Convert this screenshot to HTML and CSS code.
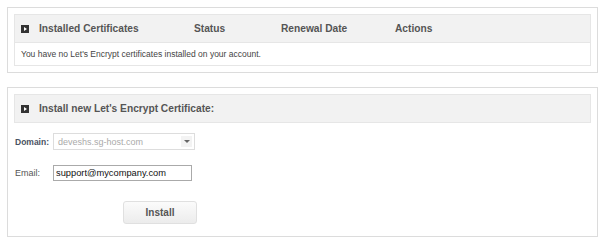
FILE: index.html
```html
<!DOCTYPE html>
<html>
<head>
    <meta charset="UTF-8">
    <title>Let's Encrypt Certificates</title>
    <link rel="stylesheet" href="styles.css">
</head>
<body>
    <div class="panel">
        <div class="panel-head">
            <span class="arrow"></span>
            <div class="cols">
                <span>Installed Certificates</span>
                <span>Status</span>
                <span>Renewal Date</span>
                <span>Actions</span>
            </div>
        </div>
        <div class="panel-row">You have no Let's Encrypt certificates installed on your account.</div>
    </div>

    <div class="panel">
        <div class="panel-head">
            <span class="arrow"></span>
            <span>Install new Let's Encrypt Certificate:</span>
        </div>
        <form class="install-form">
            <div class="field">
                <label class="bold">Domain:</label>
                <div class="select">
                    <span>deveshs.sg-host.com</span>
                    <span class="select-btn"></span>
                </div>
            </div>
            <div class="field">
                <label>Email:</label>
                <input type="text" class="text-input" value="support@mycompany.com">
            </div>
            <div class="actions">
                <button type="button" class="btn">Install</button>
            </div>
        </form>
    </div>
</body>
</html>
```

FILE: styles.css
```css
body {
    margin: 0;
    padding: 7px 2px 0 7px;
    font-family: 'Liberation Sans', Arial, sans-serif;
    font-size: 9px;
    color: #444;
    background: #fff;
}
.panel {
    border: 1px solid #dcdcdc;
    padding: 6px;
    margin-bottom: 14px;
}
.panel-head {
    display: flex;
    align-items: center;
    height: 27px;
    padding-left: 6px;
    background-color: #f2f2f2;
    border: 1px solid #e6e6e6;
    font-size: 10.2px;
    font-weight: bold;
    color: #555;
}
.arrow {
    position: relative;
    width: 8px;
    height: 8px;
    background-color: #333;
    margin-right: 10px;
    flex: none;
}
.arrow::after {
    content: "";
    position: absolute;
    left: 3px;
    top: 2px;
    border-left: 3px solid #fff;
    border-top: 2px solid transparent;
    border-bottom: 2px solid transparent;
}
.cols {
    display: grid;
    grid-template-columns: 155px 87px 114px 1fr;
    flex: 1;
}
.panel-row {
    height: 22px;
    line-height: 22px;
    padding-left: 6px;
    border: 1px solid #e6e6e6;
    border-top: none;
    font-size: 8.5px;
}
.install-form {
    padding: 10px 0 0 1px;
}
.field {
    display: flex;
    align-items: center;
    margin-bottom: 15px;
}
.field + .field {
    margin-bottom: 20px;
}
.field label {
    width: 38px;
    font-size: 9px;
    color: #555;
}
.field label.bold {
    font-size: 8.5px;
    font-weight: bold;
    color: #4a5262;
}
.select {
    display: flex;
    align-items: center;
    justify-content: space-between;
    box-sizing: border-box;
    width: 142px;
    height: 17px;
    padding-left: 4px;
    border: 1px solid #ddd;
    color: #aaa;
    font-size: 9px;
}
.select-btn {
    position: relative;
    width: 11px;
    height: 11px;
    margin-right: 2px;
    background-color: #f3f3f3;
}
.select-btn::after {
    content: "";
    position: absolute;
    left: 3px;
    top: 4px;
    border-top: 3px solid #666;
    border-left: 3px solid transparent;
    border-right: 3px solid transparent;
}
.text-input {
    box-sizing: border-box;
    width: 139px;
    height: 16px;
    padding: 0 2px;
    margin: 0;
    border: 1px solid #aaa;
    font-family: 'Liberation Sans', Arial, sans-serif;
    font-size: 9.3px;
    color: #111;
}
.text-input:focus {
    outline: none;
}
.actions {
    padding: 0 0 6px 108px;
}
.btn {
    display: block;
    box-sizing: border-box;
    width: 74px;
    height: 23px;
    border: 1px solid #e0e0e0;
    border-radius: 3px;
    background: linear-gradient(#fbfbfb, #ececec);
    font-family: 'Liberation Sans', Arial, sans-serif;
    font-size: 10px;
    font-weight: bold;
    color: #555;
}
```
